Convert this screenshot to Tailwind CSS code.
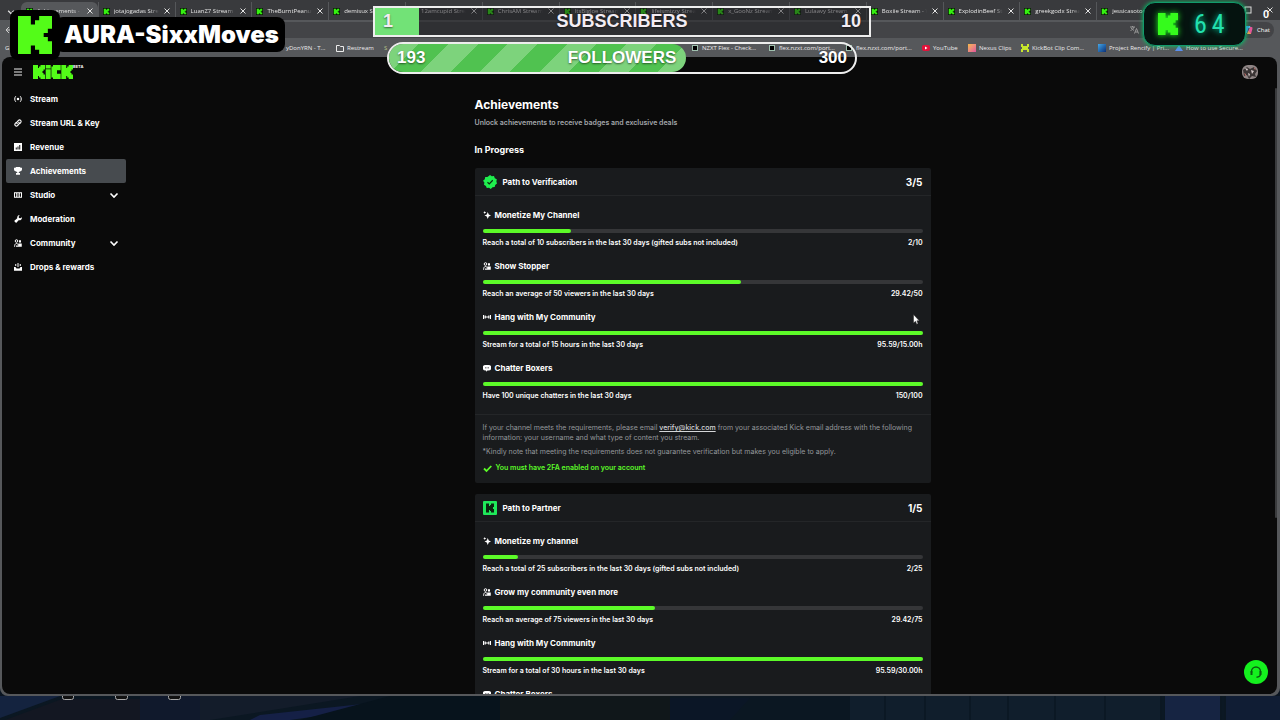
<!DOCTYPE html>
<html lang="en">
<head>
<meta charset="utf-8">
<meta name="viewport" content="width=device-width, initial-scale=1">
<title>Achievements - Kick</title>
<script src="https://cdn.jsdelivr.net/npm/@tailwindcss/browser@4"></script>
</head>
<body class="bg-[#0a1420] font-[Inter,sans-serif] text-white">
<svg class="hidden" aria-hidden="true">
  <symbol id="k" viewBox="0 0 9 9"><path fill="currentColor" d="M0 0h3.400v2h1.100V1h1.100V0H9v3H7.900v1H6.800v1h1.100v1H9v3H5.600V8H4.500V7H3.400v2H0z"/></symbol>
  <symbol id="kfav" viewBox="0 0 9 9"><path fill="#0b1a08" d="M0 0h9v9H0z"/><path fill="#35f010" d="M1 1h2.800v1.500h.8V1.500h1V1H8v2.500H7v1H6v.5h1v1h1V8H5.500v-.5h-1V6.500h-.7V8H1z"/></symbol>
  <symbol id="x" viewBox="0 0 8 8"><path d="M1.500 1.500l5 5m0-5l-5 5" stroke="currentColor" fill="none"/></symbol>
  <symbol id="stream" viewBox="0 0 16 16"><g fill="none" stroke="currentColor" stroke-width="2"><path d="M3.500 2.500C.8 5.500.8 10.500 3.500 13.500M12.500 2.500c2.700 3 2.700 8 0 11"/></g><circle cx="8" cy="8" r="2.500" fill="currentColor"/></symbol>
  <symbol id="link" viewBox="0 0 16 16"><g fill="none" stroke="currentColor" stroke-width="2.200" stroke-linecap="round"><path d="M6.500 9.500a3 3 0 0 1 0-4.200l2.400-2.400a3.100 3.100 0 0 1 4.400 4.400L12 8.600M9.500 6.500a3 3 0 0 1 0 4.200l-2.400 2.400a3.100 3.100 0 0 1-4.400-4.400L4 7.400"/></g></symbol>
  <symbol id="chart" viewBox="0 0 16 16"><path fill="currentColor" fill-rule="evenodd" d="M0 0h16v16H0zM3.500 9v4h2V9zM7 7v6h2V7zM10.500 4v9h2V4z"/></symbol>
  <symbol id="trophy" viewBox="0 0 16 16"><path fill="currentColor" d="M3.500 0h9v1.500h3.500v3c0 2.500-1.500 4-3.900 4.200A4 4 0 0 1 9.500 10.500V12H12v3.500H4V12h2.500v-1.500A4 4 0 0 1 3.900 8.700C1.500 8.500 0 7 0 4.500v-3h3.500z"/></symbol>
  <symbol id="studio" viewBox="0 0 16 16"><path fill="currentColor" fill-rule="evenodd" d="M0 2.500h16v11H0zM2 4.500v7h2v-7zM12 4.500v7h2v-7zM5.500 5v6h5V5z"/><circle cx="8" cy="8" r="1.600" fill="currentColor"/></symbol>
  <symbol id="wrench" viewBox="0 0 16 16"><path fill="currentColor" d="M11.500 0L9.400 3l.4 3 2.900.6L15.500 4.400c.8 2.500-.2 4.600-2.100 5.500-1.200.6-2.400.6-3.500.1L4.200 16 .3 12.200l6.200-5.700C5.800 3.200 8 0 11.500 0z"/></symbol>
  <symbol id="people" viewBox="0 0 16 16"><circle cx="5" cy="4" r="2.600" fill="none" stroke="currentColor" stroke-width="2"/><path d="M1.200 15.500c0-4.500 1.500-6.500 3.800-6.500 1.600 0 2.800.8 3.400 2.500" fill="none" stroke="currentColor" stroke-width="2"/><path fill="currentColor" d="M10 2.500h4v4.500h-4zM8.500 9H15.500v6.500H8.500zM4 13h5v2.500H4z"/></symbol>
  <symbol id="drops" viewBox="0 0 16 16"><path fill="currentColor" d="M0 8h3l2 3h6l2-3h3v7.500H0zM7 0h2v8H7zM2.500 2h2v4h-2zM11.500 2h2v4h-2z"/></symbol>
  <symbol id="down" viewBox="0 0 10 10"><path d="M1.500 3.500L5 7l3.500-3.500" fill="none" stroke="currentColor" stroke-width="1.600"/></symbol>
  <symbol id="spark" viewBox="0 0 16 16"><path fill="currentColor" d="M9.500 2l2 5L16 9l-4.500 2-2 5-2-5L3 9l4.500-2zM3.500 0l.9 2.100L6.500 3l-2.100.9L3.500 6l-.9-2.100L.5 3l2.100-.9z"/></symbol>
  <symbol id="cast" viewBox="0 0 16 16"><path fill="currentColor" d="M0 4h2v8H0zM3 5h2.500v2h5V5H13v6h-2.500V9h-5v2H3zM14 4h2v8h-2z"/></symbol>
  <symbol id="chat" viewBox="0 0 16 16"><path fill="currentColor" fill-rule="evenodd" d="M5 2h6a5.500 5.500 0 0 1 0 11H9l-3 2.500V13H5A5.500 5.500 0 0 1 5 2zM4 7v1.500h2V7zM7 7v1.500h2V7zM10 7v1.500h2V7z"/></symbol>
</svg>

<div class="relative flex h-screen flex-col overflow-hidden">
  <!-- game footage behind the browser window -->
  <svg class="absolute bottom-0 left-0 h-6 w-full" viewBox="0 0 1280 24" preserveAspectRatio="none" aria-hidden="true">
    <path fill="#0b1722" d="M0 0h1280v24H0z"/><path fill="#14233f" d="M0 0h60L0 22z"/><path fill="#131722" d="M62 3h78v21H5z"/><path fill="#10192c" d="M140 0h60v24h-60z"/><path fill="#131c2a" d="M200 0h160L210 24h-10z"/><path fill="#152046" d="M260 19L390 5v5L290 24h-40z"/><path fill="#07131c" d="M390 0h110v24H300z"/><path fill="#10171a" d="M500 0h170v24H500z"/><path fill="#0b1626" d="M670 2h80l-20 22h-60z"/><path fill="#101e2c" d="M850 0h310v24H850z"/><path fill="#162442" d="M1165 0h55v24h-55z"/><path fill="#101d34" d="M1226 0h54v24h-54z"/>
    <path stroke="#0b1824" stroke-width="2" d="M885 0v24M925 0v24M970 0v24M1008 0v24M1055 0v24M1105 0v24M1163 0v24M1223 0v24"/>
    <g fill="#111" stroke="#aaa"><rect x="62.500" y="-5.500" width="11" height="9" rx="2"/><rect x="115.500" y="-5.500" width="12" height="9" rx="2"/><rect x="168.500" y="-5.500" width="12" height="9" rx="2"/></g>
  </svg>

  <div class="relative mb-6 flex min-h-0 flex-1 flex-col rounded-b-lg bg-[#56585b]">
    <!-- tab strip -->
    <div class="flex h-5 shrink-0 bg-[#393a3d] pr-[107px] font-['Open_Sans',sans-serif] text-[6px] leading-4 text-[#e4e4e4]">
      <button class="mt-1 flex w-[21px] shrink-0 items-center justify-center" aria-label="Search tabs"><svg class="size-2"><use href="#down"/></svg></button>
      <div id="tabs" class="flex min-w-0 flex-1 pt-[2px]" role="tablist"></div>
    </div>
    <!-- toolbar -->
    <div class="flex h-[19px] shrink-0 items-center gap-2 pr-[6px] pl-[5px] font-['Open_Sans',sans-serif] text-[6px] text-white">
      <button aria-label="Back"><svg class="size-2" viewBox="0 0 8 8"><path d="M7 4H1m3-3L1 4l3 3" stroke="#ccc" fill="none"/></svg></button>
      <div class="flex h-4 flex-1 items-center justify-end rounded-full bg-[#434447] pr-[92px] text-[#999]"><svg class="size-[9px]" viewBox="0 0 9 9"><path d="M0 2h5M2.500 1v1M4 2C3.500 4 2 5 .5 5.500M1 3l3 2.500M4.500 8.500l2-5 2 5M5.300 7h2.500" stroke="currentColor" fill="none"/></svg></div>
      <button class="flex items-center gap-1 rounded-full bg-[#434447] py-[3px] pr-1 pl-1 leading-[10px]"><svg class="size-[10px]" viewBox="0 0 10 10"><path d="M3 1h3L4 8H1.500Q0 8 .6 6z" fill="#3f8ff0"/><path d="M6 1h1l1 2H5z" fill="#4cc3e0"/><path d="M7 2h1.500Q10 2 9.400 4L8 9H4z" fill="#e6559a"/><path d="M4 9l1.500-3L8 9z" fill="#f5a04a"/></svg>Chat</button>
    </div>
    <!-- bookmarks -->
    <nav class="flex h-[18px] shrink-0 items-center pl-[5px] font-['Open_Sans',sans-serif] text-[6px] leading-3 whitespace-nowrap text-[#ececec]" aria-label="Bookmarks">
      <a href="#" class="w-[281px] shrink-0">G</a>
      <a href="#" class="w-[50px] shrink-0">yDonYRN - T...</a>
      <a href="#" class="flex w-[48px] shrink-0 items-center gap-[3px]"><svg class="size-[8px]" viewBox="0 0 8 8"><path d="M.5 1.500h3l1 1h3v5h-7z" stroke="currentColor" fill="none"/></svg>Restream</a>
      <a href="#" class="w-[308px] shrink-0 text-[#b6c48a]">S</a>
      <a href="#" class="flex w-[77px] shrink-0 items-center gap-1"><i class="size-[6px] border border-[#9fc0ae] bg-black"></i>NZXT Flex - Check...</a>
      <a href="#" class="flex w-[77px] shrink-0 items-center gap-1"><i class="size-[6px] border border-[#9fc0ae] bg-black"></i>flex.nzxt.com/port...</a>
      <a href="#" class="flex w-[76px] shrink-0 items-center gap-1"><i class="size-[6px] border border-[#9fc0ae] bg-black"></i>flex.nzxt.com/port...</a>
      <a href="#" class="flex w-[46px] shrink-0 items-center gap-[3px]"><svg class="size-[8px]" viewBox="0 0 8 8"><rect y="1" width="8" height="6" rx="2" fill="#e3123a"/><path d="M3 2.500L5.500 4 3 5.500z" fill="#fff"/></svg>YouTube</a>
      <a href="#" class="flex w-[53px] shrink-0 items-center gap-[3px]"><i class="size-[8px] bg-linear-to-br from-[#f5b942] to-[#e0509a]"></i>Nexus Clips</a>
      <a href="#" class="flex w-[77px] shrink-0 items-center gap-[3px]"><svg class="size-[8px]" viewBox="0 0 8 8"><path d="M0 0h2v2h4V0h2v3H7v2h1v3H6V6H2v2H0V5h1V3H0z" fill="#c7e62c"/></svg>KickBot Clip Com...</a>
      <a href="#" class="flex w-[77px] shrink-0 items-center gap-[3px]"><i class="size-[8px] bg-linear-to-br from-[#46a8e8] to-[#0d2f78]"></i>Project Rencify | Pri...</a>
      <a href="#" class="flex shrink-0 items-center gap-[3px]"><svg class="size-[8px]" viewBox="0 0 8 8"><path d="M4 1l4 6H0z" fill="#5b8df2"/></svg>How to use Secure...</a>
    </nav>

    <!-- page -->
    <div class="relative mr-[3px] mb-[2px] ml-[2px] flex min-h-0 flex-1 flex-col overflow-hidden rounded-lg bg-[#0a0a0a]">
      <header class="flex h-[30px] shrink-0 items-center pr-[19px] pl-3">
        <button aria-label="Menu"><svg class="size-2" viewBox="0 0 8 8"><path d="M0 1h8M0 4h8M0 7h8" stroke="#eee" stroke-width="1.200"/></svg></button>
        <a href="#" class="ml-[11px] flex items-start" aria-label="Kick beta">
          <svg class="h-[14px] w-10" viewBox="0 0 40 14"><g fill="#53fc18"><path d="M0 0h5v3h1V1.500h1.500V0H12v4.500h-1.500V6H9.500v2h1v1.500H12V14H7.500v-1.500H6V11H5v3H0z"/><path d="M12.700 0h5V3.500h-5zM12.700 4.200h5V14h-5zM20 0h7.700v5.300H24v3.400h3.700V14H20v-1.500h-1.600v-11H20zM28.300 0h4.900v3h1V1.500h1.500V0H40v4.500h-1.500V6h-1v2h1v1.500H40V14h-4.300v-1.500h-1.500V11h-1v3h-4.900z"/></g></svg>
          <span class="text-[4px] leading-[4px] font-bold">BETA</span>
        </a>
        <button class="ml-auto" aria-label="Account"><svg class="size-4" viewBox="0 0 16 16"><rect width="16" height="14" y="1" rx="6" fill="#8f8585"/><path d="M1 6l4-3 3 2 4-2 3 4-2 3 1 3-4-1-3 3-2-4-3 1z" fill="#3b3535"/><path d="M3 4l3 1-1 2zM9 6l3 1-2 3zM6 9l2 1-1 3z" fill="#d8cccc"/><path d="M2 9l2 1v3zM12 3l2 3-2-1z" fill="#b06a64"/></svg></button>
      </header>
      <div class="flex min-h-0 flex-1">
        <nav class="w-[126px] shrink-0 pr-[2px] pl-1 text-[8px] leading-3 font-bold" aria-label="Dashboard">
          <a href="#" class="flex h-6 items-center gap-2 px-2"><svg class="size-2"><use href="#stream"/></svg>Stream</a>
          <a href="#" class="flex h-6 items-center gap-2 px-2"><svg class="size-2"><use href="#link"/></svg>Stream URL &amp; Key</a>
          <a href="#" class="flex h-6 items-center gap-2 px-2"><svg class="size-2"><use href="#chart"/></svg>Revenue</a>
          <a href="#" class="flex h-6 items-center gap-2 rounded-xs bg-[#474b4f] px-2" aria-current="page"><svg class="size-2"><use href="#trophy"/></svg>Achievements</a>
          <a href="#" class="flex h-6 items-center gap-2 px-2"><svg class="size-2"><use href="#studio"/></svg>Studio<svg class="-mr-px ml-auto size-[10px]"><use href="#down"/></svg></a>
          <a href="#" class="flex h-6 items-center gap-2 px-2"><svg class="size-2"><use href="#wrench"/></svg>Moderation</a>
          <a href="#" class="flex h-6 items-center gap-2 px-2"><svg class="size-2"><use href="#people"/></svg>Community<svg class="-mr-px ml-auto size-[10px]"><use href="#down"/></svg></a>
          <a href="#" class="flex h-6 items-center gap-2 px-2"><svg class="size-2"><use href="#drops"/></svg>Drops &amp; rewards</a>
        </nav>
        <main class="min-w-0 flex-1 overflow-hidden">
          <div class="mx-auto max-w-[456px] pt-[10px]">
            <h1 class="text-[12px] leading-4 font-bold">Achievements</h1>
            <p class="mt-[5px] text-[7px] leading-[10px] font-semibold text-[#a4a7ab]">Unlock achievements to receive badges and exclusive deals</p>
            <h2 class="mt-[15px] text-[9px] leading-[14px] font-bold">In Progress</h2>

            <section class="mt-[11px] rounded-xs bg-[#191b1d]">
              <div class="flex h-7 items-center border-b border-[#242628] px-2">
                <svg class="size-[14px]" viewBox="0 0 28 28"><path fill="#1fee4e" d="M14 0l3.600 2.600 4.400-.4 1.600 4.200 4 2-.8 4.400L28 17l-3.600 2.800-1 4.400-4.400.2L15.600 28 12 25.400l-4.400.6-1.800-4.200L2 19.600l.8-4.400L0 11.400 3.600 8.600l.8-4.400 4.400-.2z"/><path d="M9 14.500l3.500 3.500 7-7.500" stroke="#0b2a10" stroke-width="2.400" fill="none"/></svg>
                <h3 class="ml-[6px] text-[8px] leading-3 font-bold">Path to Verification</h3>
                <span class="ml-auto text-[10px] leading-3 font-bold">3/5</span>
              </div>
              <ul class="flex flex-col gap-[11px] px-2 pt-3 pb-[13px] text-[7px] leading-[10px] font-semibold">
                <li>
                  <h4 class="flex items-center gap-1 text-[8px] leading-[14px] font-bold"><svg class="size-2"><use href="#spark"/></svg>Monetize My Channel</h4>
                  <div class="mt-[7px] h-1 rounded-full bg-[#353638]" role="progressbar" aria-label="Monetize My Channel"><div class="h-1 rounded-full bg-[#5cfa28]" style="width:20%"></div></div>
                  <p class="mt-[5px] flex justify-between"><span>Reach a total of 10 subscribers in the last 30 days (gifted subs not included)</span><span>2/10</span></p>
                </li>
                <li>
                  <h4 class="flex items-center gap-1 text-[8px] leading-[14px] font-bold"><svg class="size-2"><use href="#people"/></svg>Show Stopper</h4>
                  <div class="mt-[7px] h-1 rounded-full bg-[#353638]" role="progressbar" aria-label="Show Stopper"><div class="h-1 rounded-full bg-[#5cfa28]" style="width:58.84%"></div></div>
                  <p class="mt-[5px] flex justify-between"><span>Reach an average of 50 viewers in the last 30 days</span><span>29.42/50</span></p>
                </li>
                <li>
                  <h4 class="flex items-center gap-1 text-[8px] leading-[14px] font-bold"><svg class="size-2"><use href="#cast"/></svg>Hang with My Community</h4>
                  <div class="mt-[7px] h-1 rounded-full bg-[#353638]" role="progressbar" aria-label="Hang with My Community"><div class="h-1 rounded-full bg-[#5cfa28]" style="width:100%"></div></div>
                  <p class="mt-[5px] flex justify-between"><span>Stream for a total of 15 hours in the last 30 days</span><span>95.59/15.00h</span></p>
                </li>
                <li>
                  <h4 class="flex items-center gap-1 text-[8px] leading-[14px] font-bold"><svg class="size-2"><use href="#chat"/></svg>Chatter Boxers</h4>
                  <div class="mt-[7px] h-1 rounded-full bg-[#353638]" role="progressbar" aria-label="Chatter Boxers"><div class="h-1 rounded-full bg-[#5cfa28]" style="width:100%"></div></div>
                  <p class="mt-[5px] flex justify-between"><span>Have 100 unique chatters in the last 30 days</span><span>150/100</span></p>
                </li>
              </ul>
              <div class="border-t border-[#242628] px-2 pt-2 pb-[10px] text-[7px] leading-[10px] text-[#94979b]">
                <p>If your channel meets the requirements, please email <a href="mailto:verify@kick.com" class="font-medium text-[#d4d6d8] underline">verify@kick.com</a> from your associated Kick email address with the following information: your username and what type of content you stream.</p>
                <p class="mt-1">*Kindly note that meeting the requirements does not guarantee verification but makes you eligible to apply.</p>
                <p class="mt-[6px] flex items-center gap-1 font-semibold text-[#5cfa28]"><svg class="size-[9px]" viewBox="0 0 9 9"><path d="M1 4.500l2.500 2.500L8.300 2" stroke="currentColor" stroke-width="1.800" fill="none"/></svg>You must have 2FA enabled on your account</p>
              </div>
            </section>

            <section class="mt-[11px] rounded-xs bg-[#191b1d]">
              <div class="flex h-7 items-center border-b border-[#242628] px-2">
                <svg class="size-[14px]" viewBox="0 0 14 14"><rect width="14" height="14" rx="1" fill="#1fe85a"/><path fill="#0b2410" d="M3 2.500h3V5h1V4h1V2.500h3V6h-1v2h1v3.500H8V10H7V9H6v2.500H3z"/></svg>
                <h3 class="ml-[6px] text-[8px] leading-3 font-bold">Path to Partner</h3>
                <span class="ml-auto text-[10px] leading-3 font-bold">1/5</span>
              </div>
              <ul class="flex flex-col gap-[11px] px-2 pt-3 pb-[13px] text-[7px] leading-[10px] font-semibold">
                <li>
                  <h4 class="flex items-center gap-1 text-[8px] leading-[14px] font-bold"><svg class="size-2"><use href="#spark"/></svg>Monetize my channel</h4>
                  <div class="mt-[7px] h-1 rounded-full bg-[#353638]" role="progressbar" aria-label="Monetize my channel"><div class="h-1 rounded-full bg-[#5cfa28]" style="width:8%"></div></div>
                  <p class="mt-[5px] flex justify-between"><span>Reach a total of 25 subscribers in the last 30 days (gifted subs not included)</span><span>2/25</span></p>
                </li>
                <li>
                  <h4 class="flex items-center gap-1 text-[8px] leading-[14px] font-bold"><svg class="size-2"><use href="#people"/></svg>Grow my community even more</h4>
                  <div class="mt-[7px] h-1 rounded-full bg-[#353638]" role="progressbar" aria-label="Grow my community even more"><div class="h-1 rounded-full bg-[#5cfa28]" style="width:39.23%"></div></div>
                  <p class="mt-[5px] flex justify-between"><span>Reach an average of 75 viewers in the last 30 days</span><span>29.42/75</span></p>
                </li>
                <li>
                  <h4 class="flex items-center gap-1 text-[8px] leading-[14px] font-bold"><svg class="size-2"><use href="#cast"/></svg>Hang with My Community</h4>
                  <div class="mt-[7px] h-1 rounded-full bg-[#353638]" role="progressbar" aria-label="Hang with My Community"><div class="h-1 rounded-full bg-[#5cfa28]" style="width:100%"></div></div>
                  <p class="mt-[5px] flex justify-between"><span>Stream for a total of 30 hours in the last 30 days</span><span>95.59/30.00h</span></p>
                </li>
                <li>
                  <h4 class="flex items-center gap-1 text-[8px] leading-[14px] font-bold"><svg class="size-2"><use href="#chat"/></svg>Chatter Boxers</h4>
                </li>
              </ul>
            </section>
          </div>
        </main>
      </div>
      <div class="absolute top-[31px] right-0 h-[430px] w-[2px] rounded-full bg-[#3a3b3d]"></div>
      <button class="absolute right-[9px] bottom-[10px] flex size-6 items-center justify-center rounded-full bg-[#14f01e]" aria-label="Support"><svg class="size-[14px]" viewBox="0 0 14 14"><path d="M2.500 8V6.500a4.500 4.500 0 0 1 9 0V9q0 3-4 3.200" stroke="#0a5a10" stroke-width="1.400" fill="none"/><path d="M1.500 6h2v4h-2zM10.500 6h2v4h-2z" fill="#0a5a10"/></svg></button>
    </div>
  </div>

  <!-- window controls -->
  <div class="absolute top-[6px] right-[6px] flex items-center gap-[14px] text-[#ddd]"><svg class="size-2" viewBox="0 0 8 8"><rect x="1" y="1" width="6" height="6" stroke="currentColor" fill="none"/></svg><svg class="size-2"><use href="#x"/></svg></div>
  <span class="absolute top-2 right-[11px] font-['Liberation_Sans',sans-serif] text-[11px] leading-3 font-bold">0</span>

  <!-- stream overlays -->
  <div class="absolute top-[17px] left-[55px] flex h-[35px] items-center rounded-lg bg-black pr-[6px] pl-[9px] text-[24px] leading-8 font-black">AURA-SixxMoves</div>
  <div class="absolute top-[10px] left-[10px] flex size-[50px] items-center justify-center rounded-lg bg-black"><svg class="h-[38px] w-[34px] text-[#53fc18]" viewBox="0 0 9 9" preserveAspectRatio="none"><use href="#k"/></svg></div>

  <div class="absolute top-[6px] left-[373px] flex h-[31px] w-[498px] border-2 border-[#eee] bg-[#1c1c20]/50 font-['Liberation_Sans',sans-serif] text-[18px] font-bold [text-shadow:0_1px_2px_#0008]">
    <div class="w-[44px] bg-[#72e277]"></div>
    <div class="absolute inset-x-2 top-[3px] flex justify-between leading-5 text-[#f3edf3]"><span>1</span><span>10</span></div>
    <div class="absolute inset-x-0 top-[3px] text-center leading-5 text-[#f3edf3]">SUBSCRIBERS</div>
  </div>
  <div class="absolute top-[42px] left-[387px] flex h-8 w-[470px] overflow-hidden rounded-full border-2 border-[#eee] font-['Liberation_Sans',sans-serif] text-[17px] font-bold [text-shadow:0_1px_2px_#0008]">
    <div class="w-[297px] rounded-r-full bg-[repeating-linear-gradient(135deg,#7dd37c_0_21px,#50c250_21px_42px)]"></div>
    <div class="absolute inset-x-2 top-1 flex justify-between leading-5"><span>193</span><span>300</span></div>
    <div class="absolute inset-x-0 top-1 text-center leading-5">FOLLOWERS</div>
  </div>

  <div class="absolute top-[2px] left-[1143px] flex h-[44px] w-[103px] items-center rounded-xl border border-[#129a6c] bg-[#05130f] pl-[14px] shadow-[0_0_4px_#0c6]">
    <svg class="h-[22px] w-5 text-[#35fb1c] drop-shadow-[0_0_3px_#2f2]" viewBox="0 0 9 9" preserveAspectRatio="none"><use href="#k"/></svg>
    <div class="ml-4 flex gap-[5px] font-['Liberation_Sans_Narrow','Roboto_Condensed','DejaVu_Sans_Condensed',sans-serif] text-[26px] leading-8 text-[#22e0ae] [text-shadow:0_0_6px_#0c9]"><span>6</span><span>4</span></div>
  </div>

  <svg class="absolute top-[314px] left-[913px] h-[11px] w-[7px]" viewBox="0 0 7 11" aria-hidden="true"><path d="M.5.5v8.500l2-1.700 1.200 2.900 1.400-.6-1.200-2.800h2.400z" fill="#fff" stroke="#222" stroke-width=".5"/></svg>
</div>

<script>
  const titles = ["Achievements - Kick", "jotajogadas Stream", "LuanZ7 Stream - Watch", "TheBurntPeanut Stream", "demisux Stream", "12amcupid Stream", "ChrisAM Stream -", "ItsBigJoe Stream", "lifeismizzy Stream", "x_GooNz Stream", "Lulaavy Stream -", "Boxiie Stream - Watch", "ExplodinBeef Stream", "greekgodx Stream", "jessicasotoo Stream"];
  const plain = "flex min-w-0 flex-1 items-center gap-1 border-l border-[#55575a] px-1";
  const active = "flex min-w-0 flex-1 items-center gap-1 rounded-t-md bg-[#56585b] pr-1 pl-[5px]";
  document.getElementById("tabs").innerHTML = titles.map((t, i) =>
    `<button role="tab" aria-selected="${i === 0}" class="${i ? plain : active}"><svg class="size-[7px] shrink-0"><use href="#kfav"/></svg><span class="min-w-0 flex-1 overflow-hidden text-left whitespace-nowrap [mask-image:linear-gradient(to_right,#000_80%,transparent)]">${t}</span><svg class="size-2 shrink-0"><use href="#x"/></svg></button>`).join("");
</script>
</body>
</html>
